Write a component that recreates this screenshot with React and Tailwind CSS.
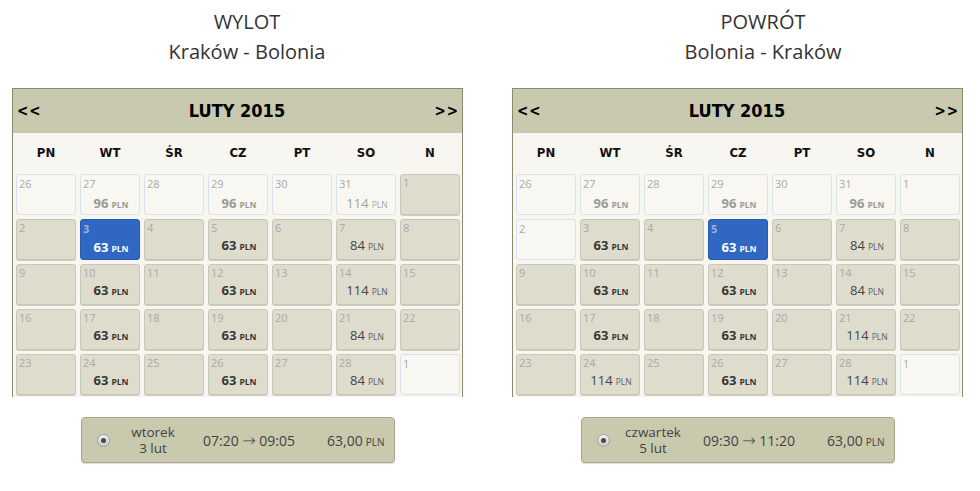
import React from "react";

const DAYS = ["PN", "WT", "ŚR", "CZ", "PT", "SO", "N"];

// cell: [day, price|null, kind] kind: "in" | "out" | "sel"
const LEFT = [
  [["26", null, "out"], ["27", 96, "out"], ["28", null, "out"], ["29", 96, "out"], ["30", null, "out"], ["31", 114, "out"], ["1", null, "in"]],
  [["2", null, "in"], ["3", 63, "sel"], ["4", null, "in"], ["5", 63, "in"], ["6", null, "in"], ["7", 84, "in"], ["8", null, "in"]],
  [["9", null, "in"], ["10", 63, "in"], ["11", null, "in"], ["12", 63, "in"], ["13", null, "in"], ["14", 114, "in"], ["15", null, "in"]],
  [["16", null, "in"], ["17", 63, "in"], ["18", null, "in"], ["19", 63, "in"], ["20", null, "in"], ["21", 84, "in"], ["22", null, "in"]],
  [["23", null, "in"], ["24", 63, "in"], ["25", null, "in"], ["26", 63, "in"], ["27", null, "in"], ["28", 84, "in"], ["1", null, "out"]],
];

const RIGHT = [
  [["26", null, "out"], ["27", 96, "out"], ["28", null, "out"], ["29", 96, "out"], ["30", null, "out"], ["31", 96, "out"], ["1", null, "out"]],
  [["2", null, "out"], ["3", 63, "in"], ["4", null, "in"], ["5", 63, "sel"], ["6", null, "in"], ["7", 84, "in"], ["8", null, "in"]],
  [["9", null, "in"], ["10", 63, "in"], ["11", null, "in"], ["12", 63, "in"], ["13", null, "in"], ["14", 84, "in"], ["15", null, "in"]],
  [["16", null, "in"], ["17", 63, "in"], ["18", null, "in"], ["19", 63, "in"], ["20", null, "in"], ["21", 114, "in"], ["22", null, "in"]],
  [["23", null, "in"], ["24", 114, "in"], ["25", null, "in"], ["26", 63, "in"], ["27", null, "in"], ["28", 114, "in"], ["1", null, "out"]],
];

const cond = { fontFamily: '"DejaVu Sans Condensed", "DejaVu Sans", sans-serif' };

function Price({ value, kind }) {
  const bold = value === 63 || value === 96;
  let numCls = "";
  let plnCls = "";
  if (kind === "sel") {
    numCls = "text-white font-bold";
    plnCls = "text-white font-bold";
  } else if (kind === "out") {
    numCls = bold ? "text-[#9a9a9a] font-bold" : "text-[#a3a3a3] font-normal";
    plnCls = bold ? "text-[#9a9a9a] font-bold" : "text-[#a8a8a8] font-normal";
  } else {
    numCls = bold ? "text-[#363636] font-bold" : "text-[#454545] font-normal";
    plnCls = bold ? "text-[#363636] font-bold" : "text-[#55606a] font-normal";
  }
  const lh =
    kind === "sel"
      ? "h-[21px] leading-[21px]"
      : kind === "out"
      ? "h-[23px] leading-[23px]"
      : "h-[19px] leading-[19px]";
  return (
    <div className={`${lh} text-center whitespace-nowrap`}>
      <span className={`text-[13px] ${numCls}`}>{value}</span>
      <span className={`text-[8.5px] ml-[3px] ${plnCls}`}>PLN</span>
    </div>
  );
}

function Cell({ day, price, kind }) {
  const base = "h-[41px] rounded-[3px] border flex flex-col pl-[2px]";
  const cls =
    kind === "sel"
      ? "bg-[#3067c3] border-[#2a5cae] pt-[1px]"
      : kind === "out"
      ? "bg-[#f8f7f1] border-[#d8e2ee] pt-[1px]"
      : "bg-[#dedccd] border-[#c9c7b7] shadow-[0_1px_0_#cfcdbd]";
  const dayCls = kind === "sel" ? "text-[#9fb0cf] font-bold" : "text-[#a9a9a9]";
  return (
    <div className={`${base} ${cls}`}>
      <div className={`text-[11px] leading-[15px] ${dayCls}`}>{day}</div>
      {price !== null && <Price value={price} kind={kind} />}
    </div>
  );
}

function Calendar({ rows }) {
  return (
    <div className="w-[451px] h-[309px] overflow-hidden border border-b-0 border-[#8b8a6c] bg-[#f7f6f0]">
      <div
        className="h-[44px] bg-[#c9c9b0] flex items-center justify-between px-[3px] text-black font-bold"
        style={cond}
      >
        <span className="text-[15px] tracking-[1px] pl-[1px]">&lt;&lt;</span>
        <span className="text-[18px] pr-[2px] pb-[1px]">LUTY 2015</span>
        <span className="text-[15px] tracking-[1px]">&gt;&gt;</span>
      </div>
      <div className="h-[39px] grid grid-cols-[repeat(7,60px)] gap-x-[4px] pl-[3px] items-center" style={cond}>
        {DAYS.map((d) => (
          <div key={d} className="text-center text-[13px] font-bold text-[#111]">
            {d}
          </div>
        ))}
      </div>
      <div className="grid grid-cols-[repeat(7,60px)] gap-x-[4px] gap-y-[4px] pl-[3px] pt-[2px]">
        {rows.flat().map((c, i) => (
          <Cell key={i} day={c[0]} price={c[1]} kind={c[2]} />
        ))}
      </div>
    </div>
  );
}

function FlightBox({ day, date, from, to }) {
  return (
    <div className="w-[314px] h-[46px] rounded-[4px] border border-[#aaa98f] bg-[#c9c9ad] shadow-[0_1px_1px_rgba(0,0,0,0.15)] flex items-center text-[#444]">
      <div className="w-[42px] shrink-0 flex justify-center">
        <div className="w-[13px] h-[13px] rounded-full border border-[#a0a0a0] bg-gradient-to-b from-[#f4f4f4] to-[#c9c9c9] flex items-center justify-center">
          <div className="w-[5px] h-[5px] rounded-full bg-[#4a4a4a]" />
        </div>
      </div>
      <div className="w-[58px] shrink-0 text-center text-[13.5px] leading-[16px] pb-[1px]">
        <div>{day}</div>
        <div>{date}</div>
      </div>
      <div className="w-[134px] shrink-0 text-center text-[14px] whitespace-nowrap">
        {from}{" "}
        <span className="text-[16px] leading-[14px] font-light" style={{ fontFamily: '"DejaVu Sans", sans-serif' }}>
          →
        </span>{" "}
        {to}
      </div>
      <div className="pl-[11px] text-[14px] whitespace-nowrap">
        63,00<span className="text-[10px] ml-[3px]">PLN</span>
      </div>
    </div>
  );
}

function Column({ title, route, rows, titleMl, flight }) {
  return (
    <div className="w-[500px] shrink-0 flex flex-col">
      <div
        className="w-[400px] text-center text-[20px] leading-[30px] text-[#333] pt-[7px]"
        style={{ marginLeft: titleMl }}
      >
        <div>{title}</div>
        <div>{route}</div>
      </div>
      <div className="pl-[12px] pt-[21px]">
        <Calendar rows={rows} />
      </div>
      <div className="pl-[81px] pt-[20px]">
        <FlightBox {...flight} />
      </div>
    </div>
  );
}

export default function App() {
  return (
    <div
      className="w-[980px] h-[491px] bg-white flex overflow-hidden"
      style={{ fontFamily: '"Open Sans", "Noto Sans", sans-serif' }}
    >
      <Column
        title="WYLOT"
        route="Kraków - Bolonia"
        rows={LEFT}
        titleMl={47}
        flight={{ day: "wtorek", date: "3 lut", from: "07:20", to: "09:05" }}
      />
      <Column
        title="POWRÓT"
        route="Bolonia - Kraków"
        rows={RIGHT}
        titleMl={63}
        flight={{ day: "czwartek", date: "5 lut", from: "09:30", to: "11:20" }}
      />
    </div>
  );
}
